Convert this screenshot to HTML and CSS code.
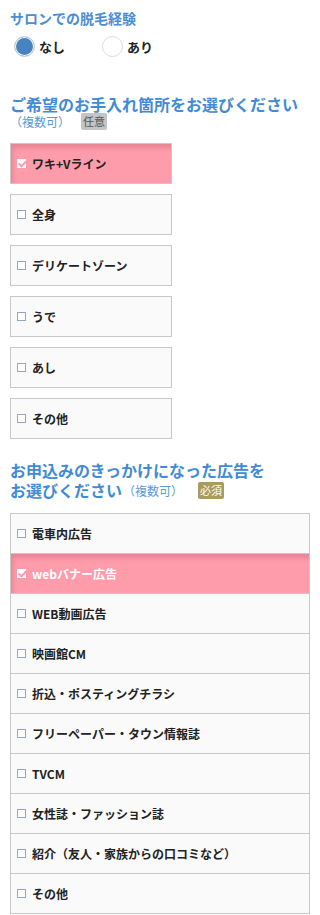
FILE: index.html
```html
<!DOCTYPE html>
<html lang="ja">
<head>
<meta charset="utf-8">
<meta name="viewport" content="width=device-width, initial-scale=1">
<title>フォーム</title>
<link rel="stylesheet" href="styles.css">
</head>
<body>
<section class="q">
  <h2 class="q-title-sm">サロンでの脱毛経験</h2>
  <div class="radios">
    <label class="opt"><span class="radio is-on"></span><span class="opt-text">なし</span></label>
    <label class="opt"><span class="radio"></span><span class="opt-text">あり</span></label>
  </div>
</section>

<section class="q q-parts">
  <h2 class="q-title q-title-one">ご希望のお手入れ箇所をお選びください</h2>
  <div class="sub-row"><span class="note">（複数可）</span><span class="badge badge-opt">任意</span></div>
  <ul class="cards">
    <li class="card is-on"><span class="chk"></span><span class="card-text">ワキ+Vライン</span></li>
    <li class="card"><span class="chk"></span><span class="card-text">全身</span></li>
    <li class="card"><span class="chk"></span><span class="card-text">デリケートゾーン</span></li>
    <li class="card"><span class="chk"></span><span class="card-text">うで</span></li>
    <li class="card"><span class="chk"></span><span class="card-text">あし</span></li>
    <li class="card"><span class="chk"></span><span class="card-text">その他</span></li>
  </ul>
</section>

<section class="q q-ads">
  <h2 class="q-title">お申込みのきっかけになった広告を<br>お選びください<span class="note note-inline">（複数可）</span><span class="badge badge-req">必須</span></h2>
  <ul class="rows">
    <li class="row"><span class="chk"></span><span class="row-text">電車内広告</span></li>
    <li class="row is-on"><span class="chk"></span><span class="row-text">webバナー広告</span></li>
    <li class="row"><span class="chk"></span><span class="row-text">WEB動画広告</span></li>
    <li class="row"><span class="chk"></span><span class="row-text">映画館CM</span></li>
    <li class="row"><span class="chk"></span><span class="row-text">折込・ポスティングチラシ</span></li>
    <li class="row"><span class="chk"></span><span class="row-text">フリーペーパー・タウン情報誌</span></li>
    <li class="row"><span class="chk"></span><span class="row-text">TVCM</span></li>
    <li class="row"><span class="chk"></span><span class="row-text">女性誌・ファッション誌</span></li>
    <li class="row"><span class="chk"></span><span class="row-text">紹介（友人・家族からの口コミなど）</span></li>
    <li class="row"><span class="chk"></span><span class="row-text">その他</span></li>
  </ul>
</section>
</body>
</html>
```

FILE: styles.css
```css
* { box-sizing: border-box; }

html, body {
  margin: 0;
  background: #fff;
}

body {
  padding: 8px 10px 0;
  font-family: "Noto Sans CJK JP", "Noto Sans", sans-serif;
  color: #222;
  width: 320px;
}

h2, ul { margin: 0; padding: 0; }
ul { list-style: none; }

.q-title-sm {
  font-size: 14px;
  line-height: 20px;
  font-weight: 700;
  color: #4b8ed3;
}

.radios {
  display: flex;
  margin-top: 7px;
  padding-left: 4px;
  height: 22px;
  align-items: center;
}

.opt {
  display: flex;
  align-items: center;
  gap: 4px;
  width: 88px;
}

.radio {
  width: 21px;
  height: 21px;
  border-radius: 50%;
  border: 1px solid #dcdcdc;
  background: #fff;
  flex: none;
}

.radio.is-on {
  background: #4683c1;
  box-shadow: inset 0 0 0 1px #fff;
  border-color: #d6d6d6;
}

.opt-text {
  font-size: 13px;
  font-weight: 700;
  color: #222;
}

.q-parts { margin-top: 38px; }

.q-title {
  font-size: 16px;
  line-height: 20px;
  font-weight: 700;
  color: #3f8bd5;
}

.q-title-one {
  line-height: 18px;
}

.sub-row {
  display: flex;
  align-items: center;
  height: 17px;
}

.note {
  font-size: 12px;
  font-weight: 400;
  color: #5b9ad6;
  width: 71px;
}

.note-inline {
  display: inline-block;
  width: auto;
  margin-left: 1px;
  margin-right: 15px;
  vertical-align: 1px;
  line-height: 18px;
}

.badge {
  display: inline-block;
  font-size: 11px;
  line-height: 17px;
  padding: 0 2px;
  border-radius: 2px;
  font-weight: 400;
}

.badge-opt {
  background: #c4c4c4;
  color: #555;
}

.badge-req {
  background: #a89b5e;
  color: #fff;
  vertical-align: 2px;
  padding: 0 2px;
  line-height: 17px;
}

.cards {
  margin-top: 13px;
  display: flex;
  flex-direction: column;
  gap: 10px;
}

.card {
  width: 162px;
  height: 41px;
  border: 1px solid #c8c8c8;
  background: #fafafa;
  display: flex;
  align-items: center;
  gap: 6px;
  padding-left: 6px;
}

.chk {
  width: 9px;
  height: 9px;
  border: 1px solid #8fa9c7;
  background: #fff;
  flex: none;
  position: relative;
}

.is-on .chk {
  border: none;
  background: #fff;
}

.is-on .chk::after {
  content: "";
  position: absolute;
  left: 3px;
  top: 0px;
  width: 3px;
  height: 6px;
  border: solid #ff9aab;
  border-width: 0 2px 2px 0;
  transform: rotate(45deg);
}

.card-text, .row-text {
  font-size: 12px;
  font-weight: 700;
  color: #222;
}

.card.is-on, .row.is-on {
  background: #ff9cab;
  box-shadow: inset 3px 5px 5px -1px rgba(170, 70, 90, 0.28);
}

.q-ads { margin-top: 21px; }

.rows {
  margin-top: 13px;
  width: 300px;
  border: 1px solid #c8c8c8;
}

.row {
  height: 40px;
  border-bottom: 1px solid #c8c8c8;
  background: #fafafa;
  display: flex;
  align-items: center;
  gap: 6px;
  padding-left: 6px;
}

.row:last-child {
  height: 39px;
  border-bottom: none;
}

.row.is-on .row-text { color: #fff; }
```
